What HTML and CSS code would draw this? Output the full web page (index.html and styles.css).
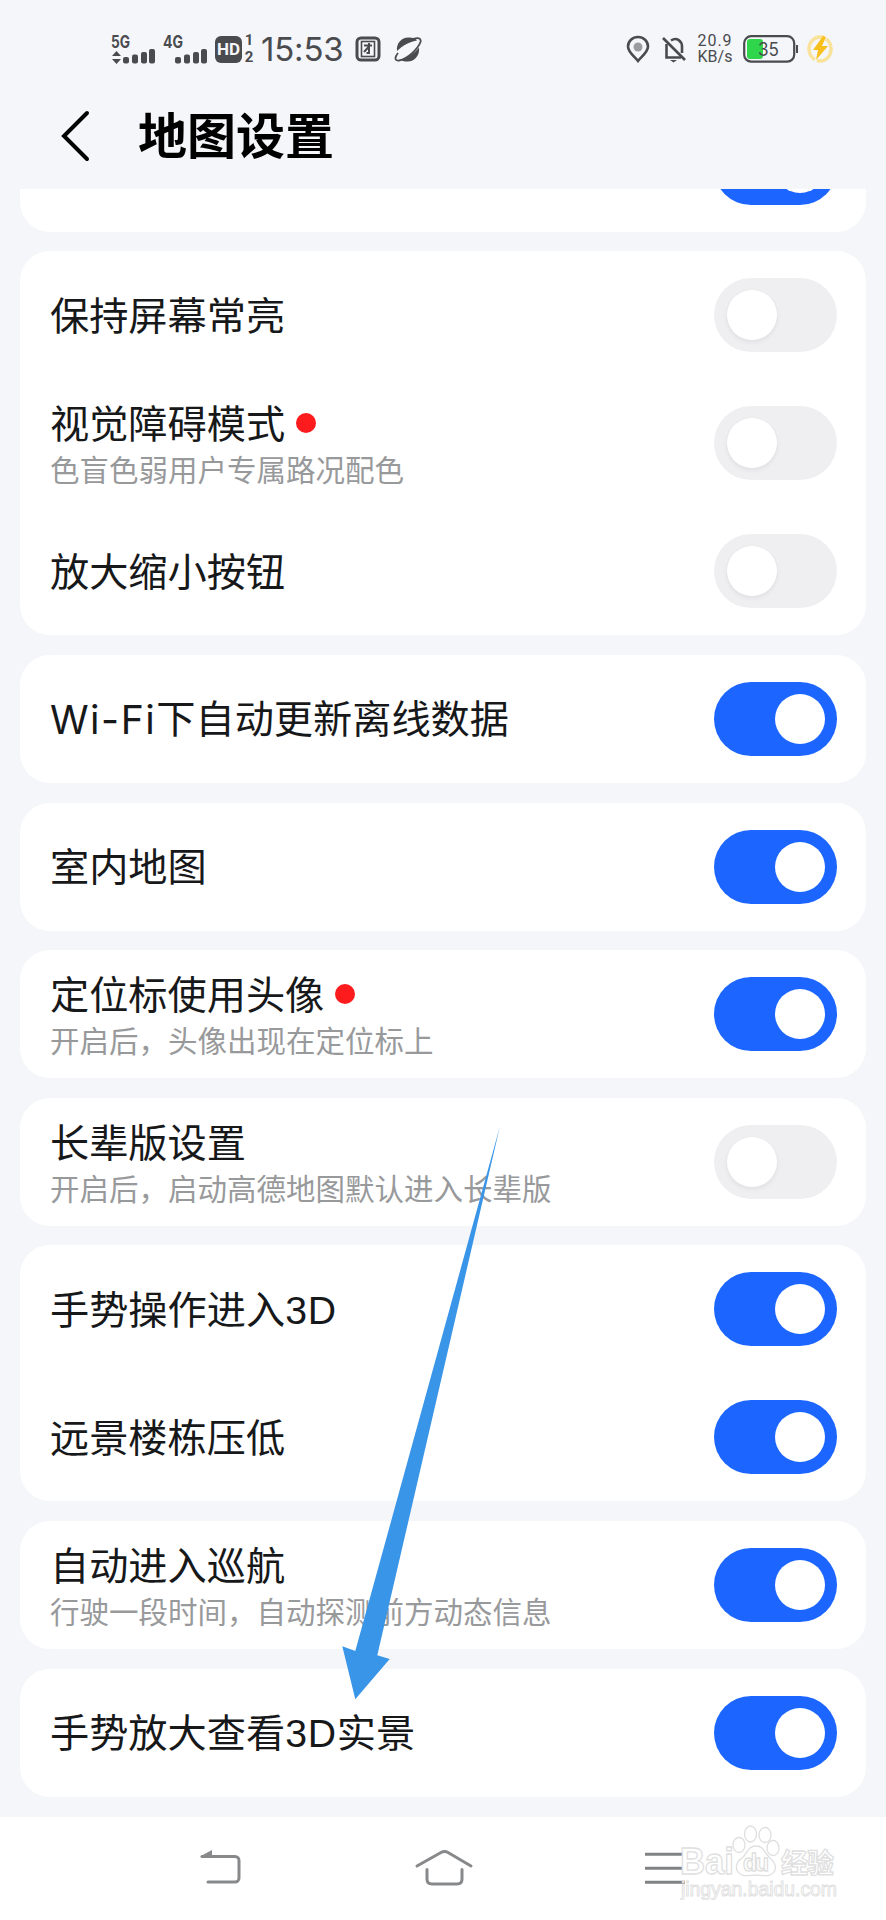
FILE: index.html
```html
<!DOCTYPE html>
<html lang="zh-CN">
<head>
  <meta charset="utf-8">
  <title>地图设置</title>
  <link rel="stylesheet" href="styles.css">
</head>
<body>
<div class="phone">

  <!-- status bar -->
  <div class="status">
    <div class="status-left">
      <svg class="signal" width="46" height="32" viewBox="0 0 46 32">
        <text class="net" x="0" y="15" textLength="19" lengthAdjust="spacingAndGlyphs">5G</text>
        <path d="M1 23l4.500-5 4.500 5zM1 26l4.500 5 4.500-5z"/>
        <rect x="12" y="24" width="6" height="6.500" rx="2"/>
        <rect x="21" y="21.500" width="6" height="9" rx="2"/>
        <rect x="30" y="19" width="6" height="11.500" rx="2"/>
        <rect x="38" y="16" width="6" height="14.500" rx="2"/>
      </svg>
      <svg class="signal" width="46" height="32" viewBox="0 0 46 32">
        <text class="net" x="0" y="15" textLength="20" lengthAdjust="spacingAndGlyphs">4G</text>
        <rect x="12" y="24" width="6" height="6.500" rx="2"/>
        <rect x="21" y="21.500" width="6" height="9" rx="2"/>
        <rect x="30" y="19" width="6" height="11.500" rx="2"/>
        <rect x="38" y="16" width="6" height="14.500" rx="2"/>
      </svg>
      <span class="hd">HD</span>
      <span class="sims"><span>1</span><span>2</span></span>
      <span class="time">15:53</span>
      <svg class="tuan" width="26" height="26" viewBox="0 0 26 26">
        <rect x="2" y="2" width="22" height="22" rx="4" fill="none" stroke="#4a4b4f" stroke-width="3"/>
        <rect x="6.500" y="5.500" width="13" height="15" fill="none" stroke="#4a4b4f" stroke-width="1.600"/>
        <path d="M9 9.500h8M14 7v10h-2.500M14 10.500L9 16" fill="none" stroke="#4a4b4f" stroke-width="2"/>
      </svg>
      <svg width="28" height="27" viewBox="0 0 28 27">
        <path d="M3 15C2 7 8 1 15 1.500c4 0 7 1 8 3C17 5 8 10 3 15zM25 11.500C26 20 20 26 13 25.500c-3 0-5-.5-7-2C13 22 21 17 25 11.500z"/>
        <path d="M4 17C0 22 1 25 5 24.500 13 23 24 13 26.500 6 27.500 2 24 1.500 19 3" fill="none" stroke="#4a4b4f" stroke-width="1.800"/>
      </svg>
    </div>
    <div class="status-right">
      <svg class="pin" width="24" height="28" viewBox="0 0 24 28">
        <path d="M12 26C8 21 2 17 2 11.500a10 9.500 0 0 1 20 0C22 17 16 21 12 26z" fill="none" stroke="#4a4b4f" stroke-width="2.600"/>
        <circle cx="12" cy="12" r="4.500" fill="#9b9c9f"/>
      </svg>
      <svg class="bell" width="24" height="27" viewBox="0 0 24 27">
        <path d="M4.500 8v13.500H19M9 4.500c6-4 11 1 11 6V17" fill="none" stroke="#4a4b4f" stroke-width="2.600"/>
        <path d="M1 2l22 22" stroke="#4a4b4f" stroke-width="2.600"/>
        <path d="M8 24h7l-3.500 2.500z"/>
      </svg>
      <span class="speed"><span class="rate">20.9</span><span>KB/s</span></span>
      <svg class="battery" width="56" height="28" viewBox="0 0 56 28">
        <rect x="4" y="4" width="16" height="20" rx="3" fill="#2fd54a"/>
        <rect x="1.200" y="1.200" width="50" height="25.500" rx="7" fill="none" stroke="#4a4b4f" stroke-width="2.200"/>
        <rect x="53" y="10" width="2" height="8"/>
        <text class="level" x="15" y="20.500" textLength="21" lengthAdjust="spacingAndGlyphs">35</text>
      </svg>
      <svg class="charge" width="26" height="28" viewBox="0 0 26 28">
        <path d="M17 2.500C9 0 2 6 2 14c0 5 3 9 6 10.500M10 25.500c8 2.500 14-4 14-11.500 0-4-2-8-5-10" fill="none" stroke="#f9e29a" stroke-width="3.500"/>
        <path d="M16 1L6 15h5L9 25 21 11h-6l4-9z" fill="#f9bf1c"/>
      </svg>
    </div>
  </div>

  <div class="header">
    <svg class="back" width="32" height="52" viewBox="0 0 32 52">
      <path d="M27 3L4 26l23 23" fill="none" stroke="#050505" stroke-width="4" stroke-linecap="round"/>
    </svg>
    <h1>地图设置</h1>
  </div>

  <div class="list">
    <div class="card">
      <div class="row"><div class="label"></div><span class="toggle on"></span></div>
    </div>
    <div class="card">
      <div class="row"><div class="label">保持屏幕常亮</div><span class="toggle"></span></div>
      <div class="row">
        <div class="texts">
          <div class="label">视觉障碍模式<i class="dot"></i></div>
          <div class="sub">色盲色弱用户专属路况配色</div>
        </div>
        <span class="toggle"></span>
      </div>
      <div class="row"><div class="label">放大缩小按钮</div><span class="toggle"></span></div>
    </div>
    <div class="card">
      <div class="row"><div class="label"><span class="wifi">Wi-Fi</span>下自动更新离线数据</div><span class="toggle on"></span></div>
    </div>
    <div class="card">
      <div class="row"><div class="label">室内地图</div><span class="toggle on"></span></div>
    </div>
    <div class="card">
      <div class="row">
        <div class="texts">
          <div class="label">定位标使用头像<i class="dot"></i></div>
          <div class="sub">开启后，头像出现在定位标上</div>
        </div>
        <span class="toggle on"></span>
      </div>
    </div>
    <div class="card">
      <div class="row">
        <div class="texts">
          <div class="label">长辈版设置</div>
          <div class="sub">开启后，启动高德地图默认进入长辈版</div>
        </div>
        <span class="toggle"></span>
      </div>
    </div>
    <div class="card">
      <div class="row"><div class="label">手势操作进入<span class="latin">3D</span></div><span class="toggle on"></span></div>
      <div class="row"><div class="label">远景楼栋压低</div><span class="toggle on"></span></div>
    </div>
    <div class="card">
      <div class="row">
        <div class="texts">
          <div class="label">自动进入巡航</div>
          <div class="sub">行驶一段时间，自动探测前方动态信息</div>
        </div>
        <span class="toggle on"></span>
      </div>
    </div>
    <div class="card">
      <div class="row"><div class="label">手势放大查看<span class="latin">3D</span>实景</div><span class="toggle on"></span></div>
    </div>
  </div>

  <!-- system navigation -->
  <div class="nav">
    <svg width="44" height="38" viewBox="0 0 44 38">
      <path d="M3 8.500h33a4 4 0 0 1 4 4V30a4 4 0 0 1-4 4H9" fill="none" stroke="#88898b" stroke-width="3" stroke-linecap="round"/>
      <path d="M1 8.500L13 2v7z" fill="#88898b"/>
    </svg>
    <svg width="60" height="38" viewBox="0 0 60 38">
      <path d="M3 18L27 4.500q3.500-2 7 0L57 18M13 21.500V31q0 5 5 5h25q5 0 5-5v-9.500" fill="none" stroke="#88898b" stroke-width="3" stroke-linecap="round"/>
    </svg>
    <svg width="42" height="38" viewBox="0 0 42 38">
      <path d="M1 6.200h40M1 20.200h40M1 34.200h40" stroke="#818284" stroke-width="3"/>
    </svg>
  </div>

  <svg class="watermark" width="166" height="80" viewBox="0 0 166 80">
    <text class="bai" x="6" y="54" textLength="54" lengthAdjust="spacingAndGlyphs">Bai</text>
    <ellipse cx="65" cy="25" rx="6" ry="7.500"/>
    <ellipse cx="76.500" cy="14" rx="6" ry="8"/>
    <ellipse cx="91" cy="15" rx="6" ry="7.500"/>
    <ellipse cx="99" cy="28" rx="6" ry="7.500"/>
    <path d="M82 26c-8 0-9 8-14 12-6 4-7 10-4 14 4 6 12 3 18 3s14 3 18-3c3-4 1-10-4-14-5-4-6-12-14-12z"/>
    <text class="du" x="69" y="51" textLength="26">du</text>
    <text class="jy" x="107" y="53" textLength="53">经验</text>
    <text class="site" x="7" y="76" textLength="156">jingyan.baidu.com</text>
  </svg>

  <svg class="arrow" width="160" height="574" viewBox="0 0 160 574">
    <polygon points="158,0 35.300,529.300 47.700,533 13.300,573.300 0.300,520.200 13.300,525" fill="#3995e7"/>
  </svg>
</div>
</body>
</html>
```
FILE: styles.css
```css
body {
  margin: 0;
  background: #f5f6f9;
  font-family: "Liberation Sans", "Noto Sans CJK SC", sans-serif;
}
.phone {
  position: relative;
  width: 886px;
  height: 1920px;
  display: flex;
  flex-direction: column;
  overflow: hidden;
}

/* status bar */
.status {
  height: 98px;
  box-sizing: border-box;
  padding: 33px 53px 0 111px;
  display: flex;
  justify-content: space-between;
  align-items: flex-start;
  color: #4a4b4f;
  font-family: Inter, sans-serif;
}
.status svg {
  fill: #4a4b4f;
}
.status-left, .status-right {
  display: flex;
  height: 32px;
  align-items: center;
}
.signal {
  margin-right: 6px;
}
.net {
  font-size: 17px;
  font-weight: 700;
}
.hd {
  width: 27px;
  height: 27px;
  border-radius: 6px;
  background: #4a4b4f;
  color: #f5f6f9;
  font: 700 17px/27px Roboto, sans-serif;
  text-align: center;
}
.sims {
  display: flex;
  flex-direction: column;
  width: 12px;
  margin-left: 1px;
  font: 700 15px/17px Roboto, sans-serif;
  text-align: center;
}
.time {
  width: 82px;
  margin-left: 6px;
  font-size: 33px;
  line-height: 32px;
  font-weight: 400;
  letter-spacing: -0.2px;
}
.tuan {
  margin: 0 13px 0 12px;
}
.bell {
  margin-left: 12px;
}
.speed {
  display: flex;
  flex-direction: column;
  width: 38px;
  margin-left: 10px;
  font: 16px/16.500px Roboto, sans-serif;
  text-align: center;
}
.rate {
  letter-spacing: 1px;
}
.battery {
  margin-left: 9px;
}
.level {
  font-size: 18px;
}
.charge {
  margin-left: 8px;
}

/* title */
.header {
  height: 91px;
  display: flex;
  align-items: flex-start;
  padding-left: 60px;
}
.back {
  margin-top: 12px;
}
h1 {
  margin: 3px 0 0 46px;
  font-size: 49px;
  line-height: 72px;
  font-weight: 700;
  color: #000;
}

/* settings, scrolled down to the last card */
.list {
  height: 1628px;
  box-sizing: border-box;
  padding: 0 20px 20.500px;
  display: flex;
  flex-direction: column;
  justify-content: flex-end;
  gap: 19.600px;
  overflow: hidden;
}
.card {
  flex: none;
  background: #fff;
  border-radius: 30px;
}
.row {
  height: 128px;
  box-sizing: border-box;
  padding: 0 29px 0 30px;
  display: flex;
  justify-content: space-between;
  align-items: center;
}
.texts {
  padding-bottom: 3px;
}
.label {
  display: flex;
  align-items: center;
  padding-top: 3px;
  font-size: 39.200px;
  line-height: 58px;
  color: #17181a;
}
.wifi {
  font-family: Inter, sans-serif;
  letter-spacing: 1.500px;
}
.latin {
  letter-spacing: .8px;
}
.sub {
  margin-top: -2px;
  font-size: 29.500px;
  line-height: 38px;
  color: #98999b;
}
.dot {
  width: 20px;
  height: 20px;
  margin: -4px 0 0 11px;
  border-radius: 50%;
  background: #fd1b1d;
}
.toggle {
  width: 123px;
  height: 74px;
  box-sizing: border-box;
  padding: 12px 13px;
  border-radius: 37px;
  background: #efeff2;
  display: flex;
}
.toggle::before {
  content: "";
  width: 50px;
  height: 50px;
  border-radius: 50%;
  background: #fff;
  box-shadow: 0 2px 5px rgba(0, 0, 0, .07);
}
.toggle.on {
  background: #1c66ff;
  justify-content: flex-end;
  padding-right: 12px;
}
.toggle.on::before {
  box-shadow: none;
}

/* bottom bar */
.nav {
  flex: 1;
  background: #fff;
  display: flex;
  align-items: flex-start;
  justify-content: space-between;
  padding: 31px 200px 0 199px;
}

/* overlays */
.watermark {
  position: absolute;
  left: 674px;
  top: 1820px;
  fill: #fff;
  stroke: #dfdfdf;
  stroke-width: 1.300;
}
.bai {
  font-size: 36px;
  font-weight: 700;
}
.du {
  font-size: 23px;
  font-weight: 700;
}
.jy {
  font-size: 27px;
  font-weight: 700;
}
.site {
  font-size: 19.400px;
  stroke-width: .9;
}
.arrow {
  position: absolute;
  left: 342px;
  top: 1126px;
}
```
